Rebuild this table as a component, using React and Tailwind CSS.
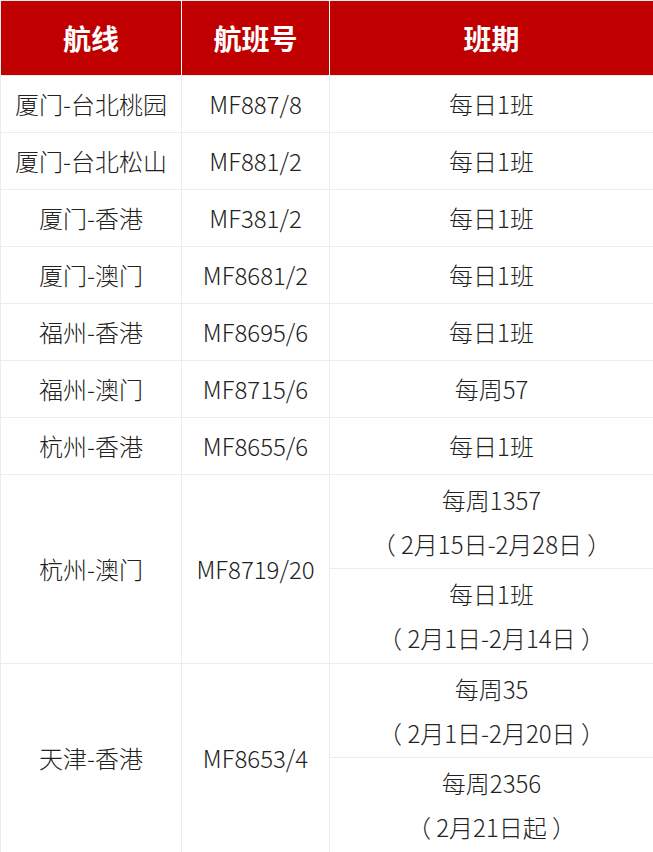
import React from "react";

const rows = [
  { route: "厦门-台北桃园", flight: "MF887/8", sched: [["每日1班"]] },
  { route: "厦门-台北松山", flight: "MF881/2", sched: [["每日1班"]] },
  { route: "厦门-香港", flight: "MF381/2", sched: [["每日1班"]] },
  { route: "厦门-澳门", flight: "MF8681/2", sched: [["每日1班"]] },
  { route: "福州-香港", flight: "MF8695/6", sched: [["每日1班"]] },
  { route: "福州-澳门", flight: "MF8715/6", sched: [["每周57"]] },
  { route: "杭州-香港", flight: "MF8655/6", sched: [["每日1班"]] },
  {
    route: "杭州-澳门",
    flight: "MF8719/20",
    sched: [
      ["每周1357", "（ 2月15日-2月28日 ）"],
      ["每日1班", "（ 2月1日-2月14日 ）"],
    ],
  },
  {
    route: "天津-香港",
    flight: "MF8653/4",
    sched: [
      ["每周35", "（ 2月1日-2月20日 ）"],
      ["每周2356", "（ 2月21日起 ）"],
    ],
  },
];

const cell = "border border-[#ececec] text-center align-middle p-0";

export default function App() {
  return (
    <div
      className="w-[653px] bg-white text-[#222] font-light"
      style={{ fontFamily: '"Noto Sans CJK SC", "Noto Sans", sans-serif' }}
    >
      <table className="w-[653px] table-fixed border-collapse">
        <colgroup>
          <col className="w-[181px]" />
          <col className="w-[148px]" />
          <col className="w-[324px]" />
        </colgroup>
        <thead>
          <tr className="h-[75px] bg-[#c00000] text-white text-[28px] font-bold">
            <th className="border border-[#ececec] border-r-white">航线</th>
            <th className="border border-[#ececec] border-x-white">航班号</th>
            <th className="border border-[#ececec] border-l-white">班期</th>
          </tr>
        </thead>
        <tbody className="text-[24px]">
          {rows.map((r) =>
            r.sched.length === 1 ? (
              <tr key={r.route} className="h-[57px]">
                <td className={cell}>{r.route}</td>
                <td className={cell}>{r.flight}</td>
                <td className={cell}>{r.sched[0][0]}</td>
              </tr>
            ) : (
              <React.Fragment key={r.route}>
                <tr className="h-[94px]">
                  <td rowSpan={2} className={cell}>
                    {r.route}
                  </td>
                  <td rowSpan={2} className={cell}>
                    {r.flight}
                  </td>
                  <td className={cell}>
                    {r.sched[0].map((t) => (
                      <div key={t} className="leading-[44px] whitespace-pre">
                        {t}
                      </div>
                    ))}
                  </td>
                </tr>
                <tr className="h-[95px]">
                  <td className={cell}>
                    {r.sched[1].map((t) => (
                      <div key={t} className="leading-[44px] whitespace-pre">
                        {t}
                      </div>
                    ))}
                  </td>
                </tr>
              </React.Fragment>
            )
          )}
        </tbody>
      </table>
    </div>
  );
}
